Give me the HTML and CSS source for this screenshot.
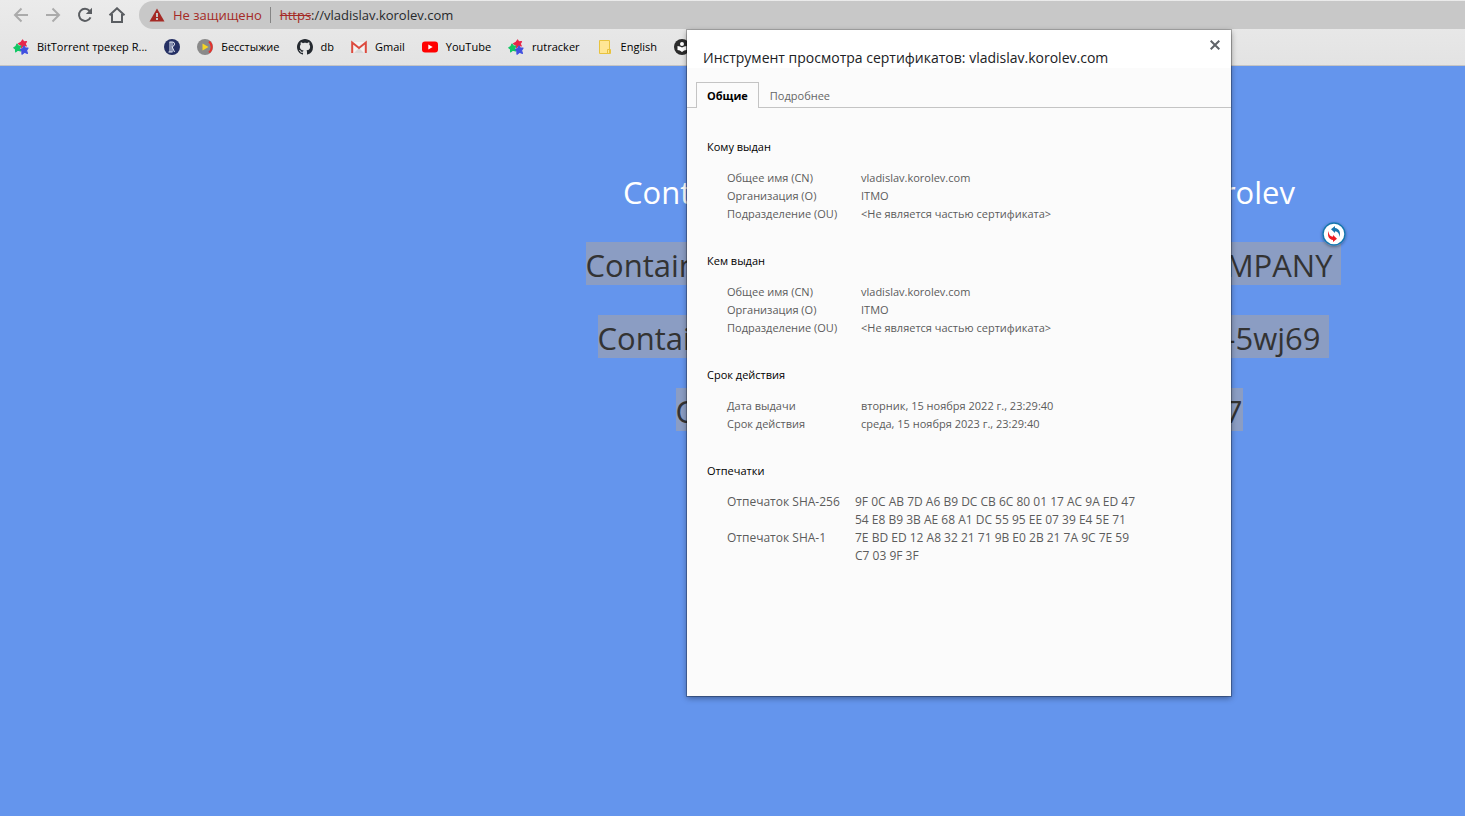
FILE: index.html
```html
<!DOCTYPE html>
<html lang="ru">
<head>
<meta charset="utf-8">
<title>vladislav.korolev.com</title>
<link rel="stylesheet" href="styles.css">
</head>
<body>
<svg class="defs" width="0" height="0" aria-hidden="true">
  <symbol id="stars" viewBox="0 0 16 16">
    <g stroke-width="1.200" stroke-linejoin="round">
    <path fill="#e8274b" stroke="#e8274b" d="M9.600 1l1.100 1.900 2.800-.2-1.400 2.100 1.200 2.200-2.800-.5-2 2-.5-2.600L5.400 4.700 8 3.300z"/>
    <path fill="#12c765" stroke="#12c765" d="M4 5l1.400 2L8 7 6.500 9.400l1.100 2.500-2.700-.8-2.200 1.800-.2-2.900L.8 8.800l2.100-1.300z"/>
    <path fill="#4050e0" stroke="#4050e0" d="M11 7l1.300 2 2.700.1-1.500 2.300.9 3-2.900-1.100-2.500 1.900-.1-3L7.500 10.300l2.300-.7z"/>
    </g>
  </symbol>
</svg>
<header class="browser">
  <nav class="toolbar" aria-label="Навигация">
    <button class="nav muted" aria-label="Назад"><svg width="16" height="16" viewBox="0 0 16 16"><path d="M15 8H2M8.500 1.500L2 8l6.500 6.500"/></svg></button>
    <button class="nav muted" aria-label="Вперёд"><svg width="16" height="16" viewBox="0 0 16 16"><path d="M1 8h13M7.500 1.500L14 8l-6.500 6.500"/></svg></button>
    <button class="nav" aria-label="Обновить"><svg width="16" height="16" viewBox="0 0 16 16"><path d="M13.500 10.300A6 6 0 1 1 12.600 4L14 5.500"/><path class="solid" d="M15 .8v6.200H8.800z"/></svg></button>
    <button class="nav" aria-label="Домой"><svg width="18" height="16" viewBox="0 0 18 16"><path d="M1.500 8.300L9 1.300l7.500 7M4 7v8h10V7"/></svg></button>
    <div class="address">
      <button class="security"><svg width="16" height="14" viewBox="0 0 16 14"><path fill="#a52a25" d="M8 .5l7.500 13H.5z"/><path fill="#c8c8c8" d="M7 5h2v4H7zM7 10h2v2H7z"/></svg>Не защищено</button>
      <s class="scheme">https</s><input class="url" aria-label="Адрес" value="://vladislav.korolev.com">
    </div>
  </nav>
  <nav class="bookmarks" aria-label="Закладки">
    <a href="#"><svg width="16" height="16"><use href="#stars"/></svg>BitTorrent трекер R...</a>
    <a href="#" aria-label="Вышка"><svg width="16" height="16" viewBox="0 0 16 16"><circle cx="8" cy="8" r="8" fill="#253064"/><path d="M5.500 3h3q2 0 2 2t-2 2.500M6 3v10M8 3v10M8 7.500l2.500 5.500M4.500 13h4" fill="none" stroke="#e8edf7"/></svg></a>
    <a href="#"><svg width="16" height="16" viewBox="0 0 16 16"><circle cx="8" cy="8" r="8" fill="#8a8a8a"/><path d="M12 2.500a7 7 0 0 1 0 11" fill="none" stroke="#e5322d" stroke-width="2"/><path d="M5.500 4.500l6 3.500-6 3.500z" fill="#f5d623"/></svg>Бесстыжие</a>
    <a href="#"><svg width="16" height="16" viewBox="0 0 16 16"><path fill="#24292f" d="M8 0C3.580 0 0 3.580 0 8c0 3.540 2.290 6.530 5.470 7.590.4.070.55-.17.55-.38 0-.19-.01-.82-.01-1.490-2.010.37-2.530-.49-2.690-.94-.09-.23-.48-.94-.82-1.130-.28-.15-.68-.52-.01-.53.63-.01 1.080.58 1.230.82.72 1.210 1.870.87 2.330.66.07-.52.28-.87.51-1.070-1.780-.2-3.640-.89-3.640-3.950 0-.87.31-1.590.82-2.150-.08-.2-.36-1.020.08-2.120 0 0 .67-.21 2.200.82.640-.18 1.320-.27 2-.27s1.360.09 2 .27c1.530-1.040 2.200-.82 2.200-.82.44 1.100.16 1.920.08 2.120.51.56.82 1.270.82 2.150 0 3.070-1.870 3.750-3.650 3.950.29.25.54.73.54 1.480 0 1.070-.01 1.930-.01 2.200 0 .21.15.46.55.38A8 8 0 0 0 16 8c0-4.420-3.580-8-8-8z"/></svg>db</a>
    <a href="#"><svg width="16" height="16" viewBox="0 0 16 16"><path fill="#f2f2f2" d="M1 3h14v11H1z"/><path fill="#d8d8d8" d="M3 14l5-5 5 5z"/><path d="M1.200 14V3.500L8 9l6.800-5.500V14" fill="none" stroke="#dc4a3e" stroke-width="2"/></svg>Gmail</a>
    <a href="#"><svg width="16" height="16" viewBox="0 0 16 16"><rect y="2.500" width="16" height="11" rx="3" fill="#f00"/><path d="M6.300 5.500v5l4.400-2.500z" fill="#fff"/></svg>YouTube</a>
    <a href="#"><svg width="16" height="16"><use href="#stars"/></svg>rutracker</a>
    <a href="#"><svg width="16" height="16" viewBox="0 0 16 16"><path d="M2.500 1.500h10v13h-10zM10.500 10.500h3v4h-3z" fill="#ffe694" stroke="#e8c33f"/></svg>English</a>
    <a href="#" aria-label="Закладка"><svg width="16" height="16" viewBox="0 0 16 16"><circle cx="8" cy="8" r="8" fill="#2b2b2b"/><circle cx="8" cy="5" r="2" fill="#fff"/><path d="M3.500 7q2.500 0 4.500 1.500Q10 7 12.500 7v4Q10 11 8 13q-2-2-4.500-2z" fill="#fff"/></svg></a>
  </nav>
</header>
<main class="page">
  <h1 class="line title"><span>Conta</span><span>rolev</span></h1>
  <p class="line company"><span>Contain</span><span>MPANY</span></p>
  <p class="line host"><span>Contai</span><span>-5wj69</span></p>
  <p class="line number"><span>C</span><span>7</span></p>
  <button class="translate" aria-label="Перевести"><svg width="24" height="24" viewBox="0 0 24 24"><circle cx="12" cy="12" r="11" fill="#fff" stroke="#1675ae" stroke-width="1.500"/><path fill="#1675ae" d="M9 7.200L13 4v2c4 .5 6 4 4.500 9-.2-3.500-1.500-5.600-4.500-5.800v1.700z"/><path fill="#ed1c24" d="M15 16.800L11 20v-2c-4-.5-6-4-4.500-9 .2 3.500 1.500 5.600 4.500 5.800v-1.700z"/></svg></button>
</main>
<section class="dialog" role="dialog" aria-labelledby="dialog-title">
  <header class="dialog-head">
    <h2 id="dialog-title">Инструмент просмотра сертификатов: vladislav.korolev.com</h2>
    <button class="close" aria-label="Закрыть"><svg width="10" height="10" viewBox="0 0 10 10"><path d="M.7.7l8.600 8.600M9.300.7L.7 9.300" stroke="#5f6368" stroke-width="2"/></svg></button>
  </header>
  <div class="tabs" role="tablist">
    <button role="tab" aria-selected="true" class="tab active">Общие</button>
    <button role="tab" aria-selected="false" class="tab">Подробнее</button>
  </div>
  <div class="details" role="tabpanel">
    <section>
      <h3>Кому выдан</h3>
      <table>
        <tr><th scope="row">Общее имя (CN)</th><td>vladislav.korolev.com</td></tr>
        <tr><th scope="row">Организация (O)</th><td>ITMO</td></tr>
        <tr><th scope="row">Подразделение (OU)</th><td>&lt;Не является частью сертификата&gt;</td></tr>
      </table>
    </section>
    <section>
      <h3>Кем выдан</h3>
      <table>
        <tr><th scope="row">Общее имя (CN)</th><td>vladislav.korolev.com</td></tr>
        <tr><th scope="row">Организация (O)</th><td>ITMO</td></tr>
        <tr><th scope="row">Подразделение (OU)</th><td>&lt;Не является частью сертификата&gt;</td></tr>
      </table>
    </section>
    <section>
      <h3>Срок действия</h3>
      <table>
        <tr><th scope="row">Дата выдачи</th><td>вторник, 15 ноября 2022 г., 23:29:40</td></tr>
        <tr><th scope="row">Срок действия</th><td>среда, 15 ноября 2023 г., 23:29:40</td></tr>
      </table>
    </section>
    <section>
      <h3>Отпечатки</h3>
      <table class="prints">
        <tr><th scope="row">Отпечаток SHA-256</th><td>9F 0C AB 7D A6 B9 DC CB 6C 80 01 17 AC 9A ED 47<br>54 E8 B9 3B AE 68 A1 DC 55 95 EE 07 39 E4 5E 71</td></tr>
        <tr><th scope="row">Отпечаток SHA-1</th><td>7E BD ED 12 A8 32 21 71 9B E0 2B 21 7A 9C 7E 59<br>C7 03 9F 3F</td></tr>
      </table>
    </section>
  </div>
</section>
</body>
</html>
```
FILE: styles.css
```css
* { box-sizing: border-box; }
body {
  margin: 0;
  min-height: 100vh;
  display: flex;
  flex-direction: column;
  background: #6495ed;
  font: 11px/18px "Open Sans", "Noto Sans", sans-serif;
  color: #000;
  overflow: hidden;
}
.defs { position: absolute; }
button { border: 0; padding: 0; background: none; font: inherit; color: inherit; }
svg { display: block; flex: none; }
h1, h2, h3, p { margin: 0; font-weight: 400; }

.browser { background: linear-gradient(#ebebeb, #e3e3e3); border-bottom: 1px solid #c4c4c4; }
.toolbar { display: flex; align-items: center; gap: 16px; padding: 1px 0 0 13px; }
.nav { width: 16px; display: flex; justify-content: center; }
.nav path { fill: none; stroke: #5a5d61; stroke-width: 2; }
.nav .solid { fill: #5a5d61; stroke: none; }
.nav.muted path { stroke: #ababab; }
.address {
  flex: 1;
  display: flex;
  align-items: center;
  height: 28px;
  margin-left: -2px;
  padding-left: 10px;
  background: #c8c8c8;
  border-radius: 14px 0 0 14px;
  font-size: 13px;
}
.security {
  display: flex;
  align-items: center;
  gap: 8px;
  height: 16px;
  margin-right: 9px;
  padding-right: 8px;
  border-right: 1px solid #858585;
  color: #a52a25;
}
.scheme { color: #a52a25; }
.url { flex: 1; border: 0; padding: 0; background: none; font: inherit; color: #27292c; outline: 0; }
.bookmarks { display: flex; align-items: center; gap: 17px; height: 36px; padding-left: 13px; }
.bookmarks a { display: flex; align-items: center; gap: 8px; color: #000; text-decoration: none; white-space: nowrap; }

.page {
  position: relative;
  flex: 1;
  display: flex;
  flex-direction: column;
  align-items: center;
  gap: 30px;
  padding: 103px 0 0 453px;
}
.line { display: flex; justify-content: space-between; padding-top: 4px; font-size: 31px; line-height: 39px; color: #333; background: #8b9dc3; }
.title { width: 672px; color: #fff; background: none; }
.company { width: 755px; margin-left: 8px; padding-right: 8px; }
.host { width: 731px; margin-left: 8px; padding-right: 8px; }
.number { width: 567px; }
.translate { position: absolute; left: 1322px; top: 156px; border-radius: 50%; box-shadow: 0 1px 3px #0005; }

.dialog {
  position: absolute;
  left: 687px;
  top: 30px;
  width: 544px;
  min-height: 666px;
  background: #fbfbfb;
  box-shadow: 0 0 0 1px #0004, 0 2px 6px #0006;
}
.dialog-head { display: flex; justify-content: space-between; height: 38px; padding: 10px 11px 0 16px; background: #fff; }
.dialog-head h2 { padding-top: 8px; font-size: 14px; line-height: 20px; color: #202124; }
.close { width: 10px; height: 10px; }
.tabs { display: flex; height: 40px; padding: 14px 0 0 9px; border-bottom: 1px solid #c4c4c4; }
.tab { height: 26px; padding: 1px 10px 0; border: 1px solid transparent; border-bottom: 0; color: #666; }
.tab.active { border-color: #c4c4c4; background: #fbfbfb; color: #000; font-weight: 700; }
.details { display: flex; flex-direction: column; gap: 29px; padding: 30px 20px; }
.details h3 { font-size: 11px; line-height: 18px; margin-bottom: 13px; }
table { margin-left: 20px; border-collapse: collapse; color: #5c5c5c; }
th, td { padding: 0; font-weight: 400; text-align: left; vertical-align: top; white-space: nowrap; }
th { width: 134px; }
.prints { font-size: 12px; }
.prints th { width: 128px; }
```
